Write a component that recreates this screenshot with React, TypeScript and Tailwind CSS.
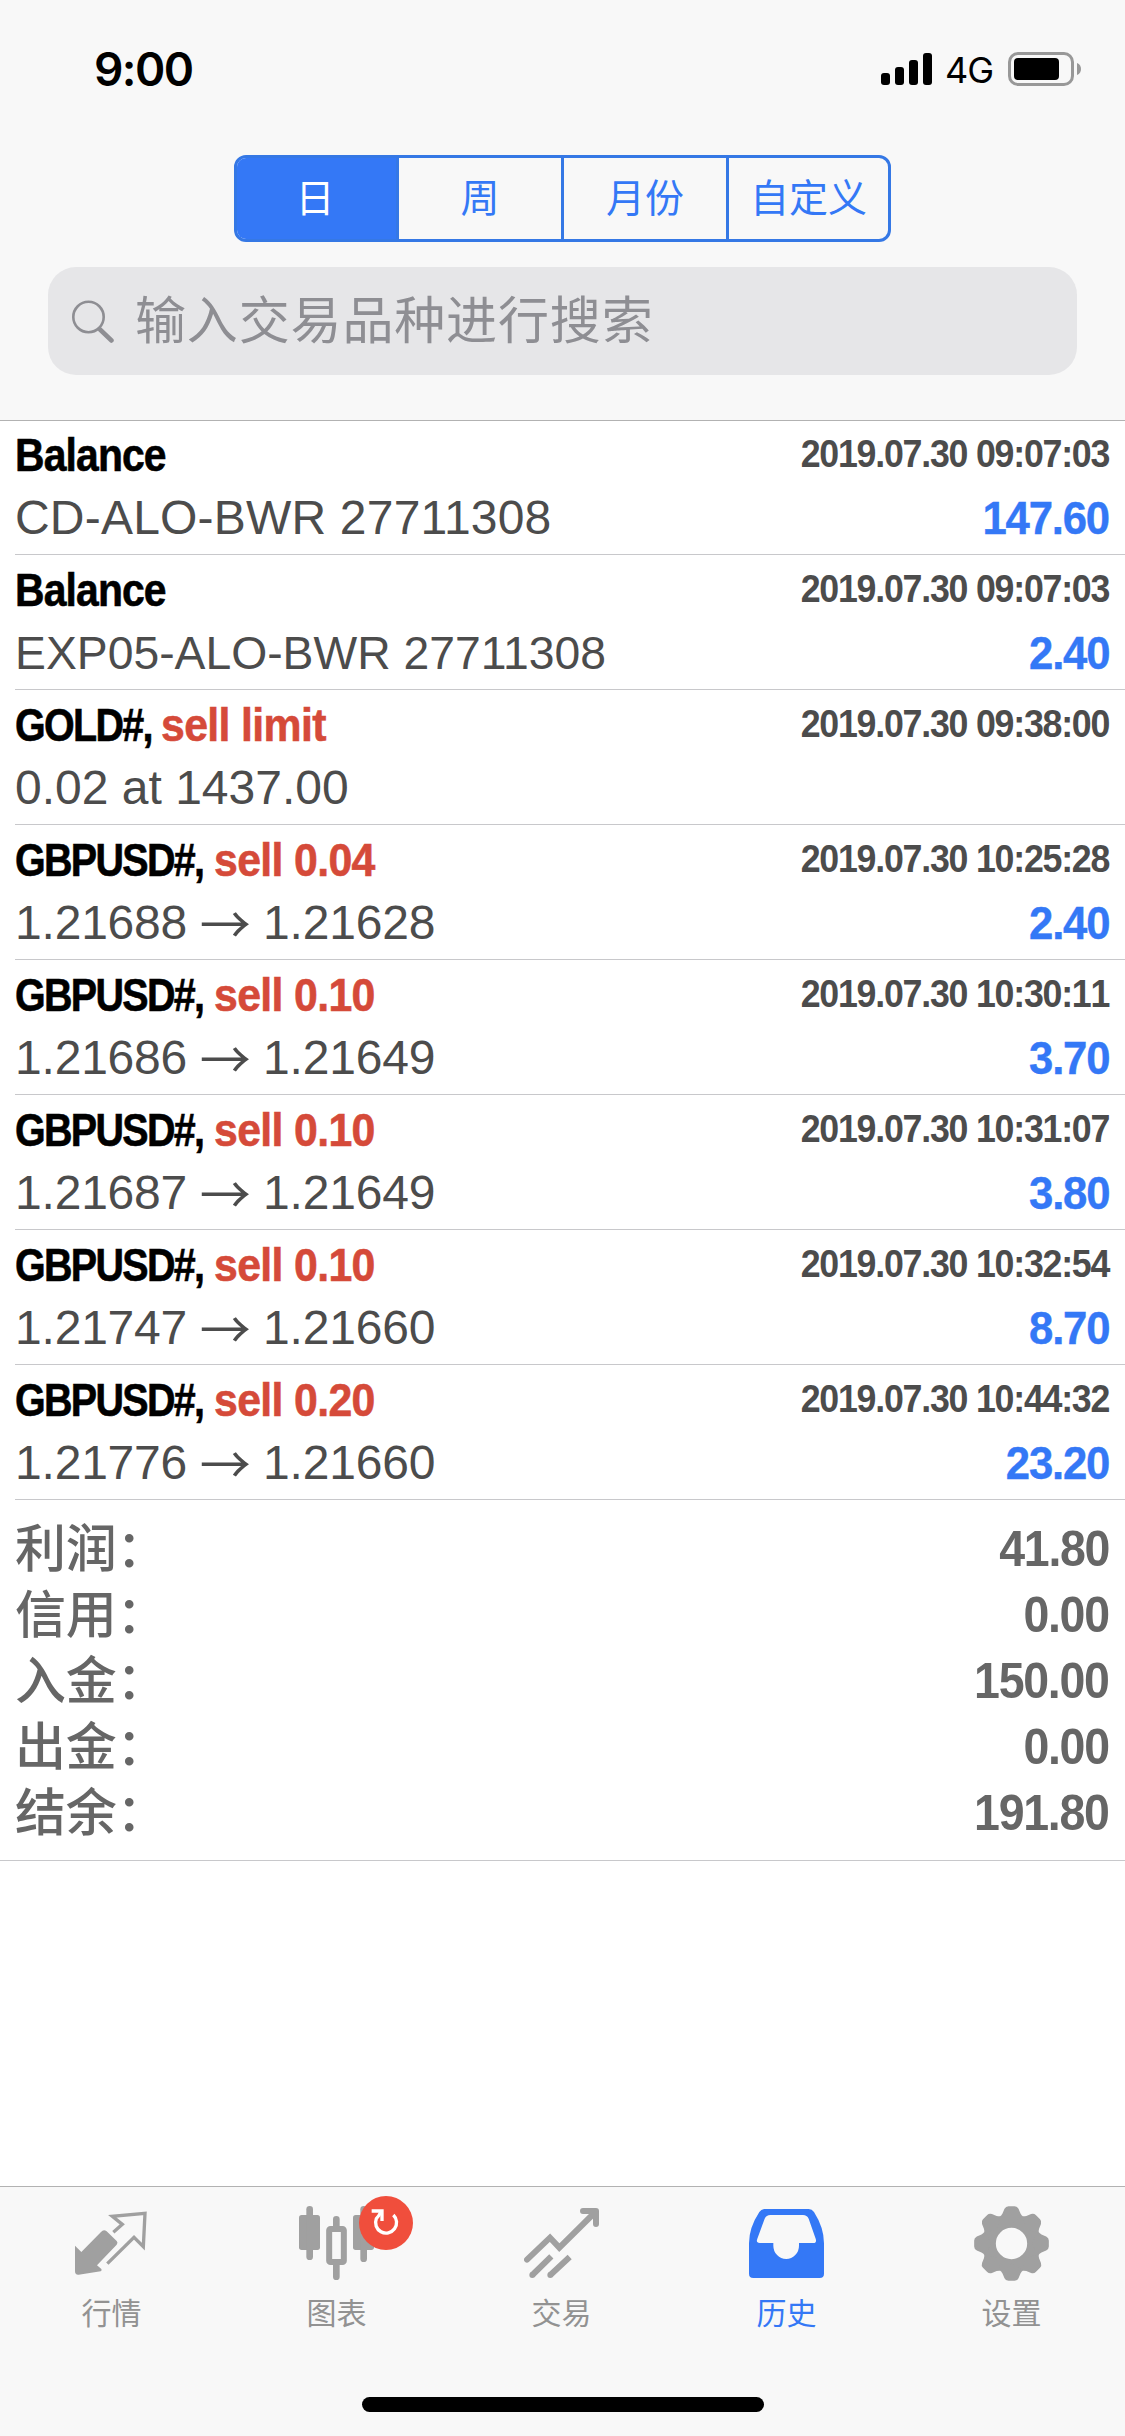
import clsx from "clsx";
import type { ReactNode } from "react";

interface Deal {
  symbol: string;
  action?: string;
  details: ReactNode;
  time: string;
  profit?: string;
  compact?: boolean;
}

const periods = ["日", "周", "月份", "自定义"];

const deals: Deal[] = [
  {
    symbol: "Balance",
    details: "CD-ALO-BWR 27711308",
    time: "2019.07.30 09:07:03",
    profit: "147.60",
  },
  {
    symbol: "Balance",
    details: "EXP05-ALO-BWR 27711308",
    time: "2019.07.30 09:07:03",
    profit: "2.40",
    compact: true,
  },
  {
    symbol: "GOLD#,",
    action: "sell limit",
    details: "0.02 at 1437.00",
    time: "2019.07.30 09:38:00",
  },
  {
    symbol: "GBPUSD#,",
    action: "sell 0.04",
    details: <PriceMove from="1.21688" to="1.21628" />,
    time: "2019.07.30 10:25:28",
    profit: "2.40",
  },
  {
    symbol: "GBPUSD#,",
    action: "sell 0.10",
    details: <PriceMove from="1.21686" to="1.21649" />,
    time: "2019.07.30 10:30:11",
    profit: "3.70",
  },
  {
    symbol: "GBPUSD#,",
    action: "sell 0.10",
    details: <PriceMove from="1.21687" to="1.21649" />,
    time: "2019.07.30 10:31:07",
    profit: "3.80",
  },
  {
    symbol: "GBPUSD#,",
    action: "sell 0.10",
    details: <PriceMove from="1.21747" to="1.21660" />,
    time: "2019.07.30 10:32:54",
    profit: "8.70",
  },
  {
    symbol: "GBPUSD#,",
    action: "sell 0.20",
    details: <PriceMove from="1.21776" to="1.21660" />,
    time: "2019.07.30 10:44:32",
    profit: "23.20",
  },
];

const totals = [
  { label: "利润：", value: "41.80" },
  { label: "信用：", value: "0.00" },
  { label: "入金：", value: "150.00" },
  { label: "出金：", value: "0.00" },
  { label: "结余：", value: "191.80" },
];

const tabs = [
  { label: "行情", icon: <QuotesIcon /> },
  { label: "图表", icon: <ChartIcon />, badge: true },
  { label: "交易", icon: <TradeIcon /> },
  { label: "历史", icon: <HistoryIcon />, active: true },
  { label: "设置", icon: <SettingsIcon /> },
];

function PriceMove({ from, to }: { from: string; to: string }) {
  return (
    <span className="flex tracking-[-0.2px]">
      {from}
      <span className="flex w-[76px] justify-center font-['Noto_Sans_CJK_SC',sans-serif] text-[51px]">
        →
      </span>
      {to}
    </span>
  );
}

function StatusBar() {
  return (
    <div className="flex h-[155px] items-start justify-between pt-[50px] pr-[44px] pl-[94px]">
      <span className="font-['Inter',sans-serif] text-[46px] leading-[38px] font-semibold tracking-[-1.6px]">
        9:00
      </span>
      <div className="flex items-start">
        <div className="mt-[3px] flex h-8 items-end gap-[5px]">
          <span className="h-3 w-[9px] rounded-[3px] bg-black" />
          <span className="h-[18px] w-[9px] rounded-[3px] bg-black" />
          <span className="h-[25px] w-[9px] rounded-[3px] bg-black" />
          <span className="h-8 w-[9px] rounded-[3px] bg-black" />
        </div>
        <span className="ml-[13px] w-[63px] font-['Inter',sans-serif] text-[36px] leading-[41px] tracking-[-1px]">
          4G
        </span>
        <svg className="mt-0.5" width="73" height="34" viewBox="0 0 73 34">
          <rect x="1.5" y="1.5" width="63" height="31" rx="8.5" fill="none" stroke="#989898" strokeWidth="3" />
          <rect x="6" y="6" width="45" height="22" rx="4" />
          <path d="M69 11c3 1 4 3.500 4 6s-1 5-4 6z" fill="#989898" />
        </svg>
      </div>
    </div>
  );
}

function PeriodSwitch() {
  return (
    <div className="mx-auto flex h-[87px] w-[657px] overflow-hidden rounded-[12px] border-[3px] border-[#3578e5]">
      {periods.map((period, index) => (
        <button
          key={period}
          className={clsx(
            "flex items-center justify-center text-[39px] leading-none",
            index === 0 ? "w-[162px] bg-[#3478f6] pr-[3px] text-white" : "text-[#3478f6]",
            index === 3 ? "w-[159px]" : "border-r-[3px] border-[#3578e5]",
            (index === 1 || index === 2) && "w-[165px]",
          )}
        >
          {period}
        </button>
      ))}
    </div>
  );
}

function SearchBar() {
  return (
    <div className="mx-12 mt-[25px] flex h-[108px] items-center rounded-[28px] bg-[#e6e6e8] pl-6 text-[#8e8e93]">
      <svg width="42" height="43" viewBox="0 0 42 43" fill="none" stroke="currentColor">
        <circle cx="16.500" cy="17" r="15.200" strokeWidth="2.600" />
        <path d="M28 29.500 39.500 40.500" strokeWidth="4.500" strokeLinecap="round" />
      </svg>
      <span className="ml-[21px] text-[51px] leading-none tracking-[0.85px]">
        输入交易品种进行搜索
      </span>
    </div>
  );
}

function DealRow({ deal }: { deal: Deal }) {
  return (
    <li className="ml-[15px] h-[135px] border-b border-[#c8c8cb] pt-[6px] pr-4">
      <div className="flex h-[56px] items-start justify-between">
        <div className="flex text-[47px] leading-[57px] font-bold whitespace-nowrap [-webkit-text-stroke:0.6px]">
          <span
            className={clsx(
              "origin-left",
              deal.action
                ? "scale-x-[0.84] tracking-[-2px]"
                : "scale-x-[0.87] tracking-[-1px]",
              deal.symbol === "GBPUSD#," && "w-[199px]",
              deal.symbol === "GOLD#," && "w-[146px]",
            )}
          >
            {deal.symbol}
          </span>
          {deal.action && (
            <span className="origin-left scale-x-[0.91] tracking-[-0.7px] text-[#d54a39]">
              {deal.action}
            </span>
          )}
        </div>
        <span className="origin-right scale-x-[0.94] text-[38px] leading-[57px] font-bold tracking-[-1.3px] text-[#4c4c4c] [font-kerning:none]">
          {deal.time}
        </span>
      </div>
      <div className="flex h-[70px] items-baseline justify-between leading-[71px]">
        <span
          className={clsx(
            "text-[#4c4c4c]",
            deal.compact ? "text-[46.3px]" : "text-[48px]",
            deal.symbol === "Balance" && !deal.compact && "tracking-[0.2px]",
          )}
        >
          {deal.details}
        </span>
        <span className="origin-right scale-x-[0.93] text-[47px] font-bold tracking-[-1.3px] text-[#3478f6] [-webkit-text-stroke:0.4px]">
          {deal.profit}
        </span>
      </div>
    </li>
  );
}

function Totals() {
  return (
    <div className="h-[361px] border-b border-[#c8c8cb] pt-[16px] pr-4 pl-[15px] font-bold text-[#666]">
      {totals.map((total) => (
        <div key={total.label} className="flex h-[66px] items-center justify-between">
          <span className="pt-0.5 text-[51px] leading-[64px] font-medium tracking-[-0.3px]">
            {total.label}
          </span>
          <span className="origin-right scale-x-[0.93] text-[50px] leading-[66px] tracking-[-1.4px]">
            {total.value}
          </span>
        </div>
      ))}
    </div>
  );
}

function QuotesIcon() {
  return (
    <svg width="75" height="75" viewBox="0 0 225 225">
      <path d="M3 119 22 138 81 78Q89 68 98 76L128 105Q133 110 128 116L69 178 82 189Q85 193 80 196L14 206Q3 207 3 196Z" fill="currentColor" />
      <path d="M118 79 145 55 115 31 213 22 208 122 180 94 100 173" fill="none" stroke="currentColor" strokeWidth="10" />
    </svg>
  );
}

function ChartIcon() {
  return (
    <svg width="75" height="75" viewBox="0 0 225 225" fill="currentColor">
      <rect x="0" y="27" width="63" height="105" rx="8" />
      <rect x="22" y="0" width="20" height="162" rx="10" />
      <rect x="90.500" y="69" width="44" height="99" rx="4" fill="none" stroke="currentColor" strokeWidth="18" />
      <path d="M112 40V64M112 172V212" stroke="currentColor" strokeWidth="20" strokeLinecap="round" />
      <rect x="162" y="27" width="63" height="105" rx="8" />
      <rect x="184" y="0" width="20" height="168" rx="10" />
    </svg>
  );
}

function TradeIcon() {
  return (
    <svg width="75" height="75" viewBox="0 0 225 225" fill="none" stroke="currentColor" strokeWidth="18">
      <path d="M9 161 78 95 106 125 214 18" strokeLinecap="round" />
      <path d="M177 15H216V54" strokeLinecap="round" strokeLinejoin="round" />
      <path d="M25 207 82 151M79 207 137 153" />
      <g fill="currentColor" stroke="none">
        <circle cx="25" cy="207" r="9" />
        <circle cx="79" cy="207" r="9" />
      </g>
    </svg>
  );
}

function HistoryIcon() {
  return (
    <svg width="75" height="75" viewBox="0 0 225 225" fill="currentColor">
      <path
        fillRule="evenodd"
        d="M47 9H179Q189 9 195 18 225 65 225 112V203Q225 216 212 216H13Q0 216 0 203V112Q0 65 31 18 37 9 47 9ZM64 27Q52 27 47 38L25 98Q20 111 32 111H73V119A38.500 40 0 0 0 150 119V111H193Q204 111 200 98L179 38Q174 27 162 27Z"
      />
    </svg>
  );
}

function SettingsIcon() {
  return (
    <svg width="75" height="75" viewBox="-112.500 -112.500 225 225">
      <circle r="67" fill="none" stroke="currentColor" strokeWidth="40" />
      {[0, 45, 90, 135, 180, 225, 270, 315].map((angle) => (
        <path
          key={angle}
          transform={`rotate(${angle})`}
          d="M-35-81Q-31-83-27-90L-21-104Q-17-112-9-112H9Q17-112 21-104L27-90Q31-83 35-81L0-60Z"
          fill="currentColor"
        />
      ))}
    </svg>
  );
}

function RefreshBadge() {
  return (
    <span className="absolute -top-2.5 left-[60px] size-[54px] rounded-full bg-[#f04e3c] text-white">
      <svg width="54" height="54" viewBox="0 0 162 162" fill="none" stroke="currentColor" strokeWidth="10">
        <path d="M103 57A31.500 31.500 0 1 1 52 68Q60 60 66 47" />
        <path d="M38 45H69V75" />
      </svg>
    </span>
  );
}

function TabBar() {
  return (
    <nav className="flex h-[250px] flex-col items-center border-t border-[#b2b2b2] bg-[#f8f8f8]">
      <div className="flex h-[210px] w-full">
        {tabs.map((tab) => (
          <div
            key={tab.label}
            className={clsx(
              "flex flex-1 flex-col items-center pt-[19px]",
              tab.active ? "text-[#3478f6]" : "text-[#a0a0a0]",
            )}
          >
            <div className="relative -left-px">
              {tab.icon}
              {tab.badge && <RefreshBadge />}
            </div>
            <span
              className={clsx(
                "mt-[18px] -ml-0.5 text-[30px] leading-[30px]",
                !tab.active && "text-[#929292]",
              )}
            >
              {tab.label}
            </span>
          </div>
        ))}
      </div>
      <div className="h-[15px] w-[402px] rounded-full bg-black" />
    </nav>
  );
}

export default function App() {
  return (
    <div className="flex h-[2436px] w-[1125px] flex-col overflow-hidden bg-white font-['Liberation_Sans','Noto_Sans_CJK_SC',sans-serif] text-black">
      <header className="h-[421px] shrink-0 border-b border-[#b2b2b2] bg-[#f8f8f8]">
        <StatusBar />
        <PeriodSwitch />
        <SearchBar />
      </header>
      <main className="-mt-px flex-1">
        <ul>
          {deals.map((deal) => (
            <DealRow key={deal.time + deal.profit} deal={deal} />
          ))}
        </ul>
        <Totals />
      </main>
      <TabBar />
    </div>
  );
}
